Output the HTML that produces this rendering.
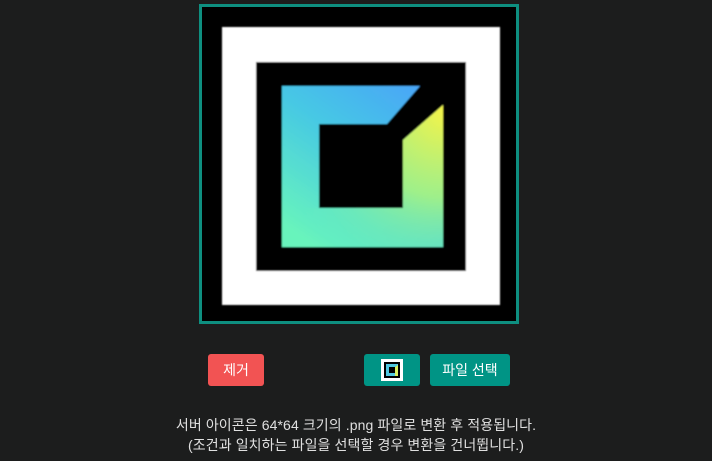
<!DOCTYPE html>
<html><head><meta charset="utf-8"><style>
body{margin:0;width:712px;height:461px;background:#1c1d1d;position:relative;overflow:hidden;font-family:"Liberation Sans","Noto Sans CJK KR",sans-serif}
.b{position:absolute;border-radius:3px;color:#fff;font-size:14px;display:flex;align-items:center;justify-content:center}
.t{position:absolute;left:0;width:712px;text-align:center;color:#e0e0e0;font-size:14px;line-height:20px;top:415px;letter-spacing:0.1px}
</style></head><body>
<svg width="712" height="330" style="position:absolute;left:0;top:0">
<defs>
<linearGradient id="g" x1="430" y1="90" x2="320" y2="250" gradientUnits="userSpaceOnUse">
<stop offset="0" stop-color="#48a4f8"/><stop offset="0.45" stop-color="#46c8e4"/><stop offset="1" stop-color="#68f4bc"/></linearGradient>
<radialGradient id="y" cx="445" cy="110" r="175" gradientUnits="userSpaceOnUse">
<stop offset="0" stop-color="#f4f448" stop-opacity="1"/><stop offset="0.5" stop-color="#a8f480" stop-opacity="0.9"/><stop offset="1" stop-color="#70f8b0" stop-opacity="0"/></radialGradient>
<filter id="bl"><feGaussianBlur stdDeviation="0.7"/></filter>
</defs>
<rect x="200.5" y="5.5" width="317" height="317" fill="#000" stroke="#0e8f80" stroke-width="3"/>
<g filter="url(#bl)">
<rect x="222" y="27" width="278" height="278" fill="#fff"/>
<rect x="256" y="62" width="210" height="209" fill="#000"/>
<polygon points="282,86 420,86 387,124 319,124 319,208 403,208 403,140 443,105 443,247 282,247" fill="url(#g)"/>
<polygon points="403,140 443,105 443,247 282,247 282,208 403,208" fill="url(#y)"/>
</g>
</svg>
<div class="b" style="left:208px;top:354px;width:56px;height:32px;background:#f25353">제거</div>
<div class="b" style="left:364px;top:354px;width:56px;height:32px;background:#009485">
<svg width="22" height="22"><rect x="0" y="0" width="22" height="22" fill="#fff"/><rect x="3" y="3" width="16" height="16" fill="#000"/><rect x="5" y="5" width="12" height="12" fill="#50c8e0"/><rect x="8" y="8" width="6" height="6" fill="#000"/><polygon points="14,8 17,6 17,17 14,17" fill="#d8f060"/></svg></div>
<div class="b" style="left:430px;top:354px;width:80px;height:32px;background:#009485">파일 선택</div>
<div class="t">서버 아이콘은 64*64 크기의 .png 파일로 변환 후 적용됩니다.<br>(조건과 일치하는 파일을 선택할 경우 변환을 건너뜁니다.)</div>
</body></html>
